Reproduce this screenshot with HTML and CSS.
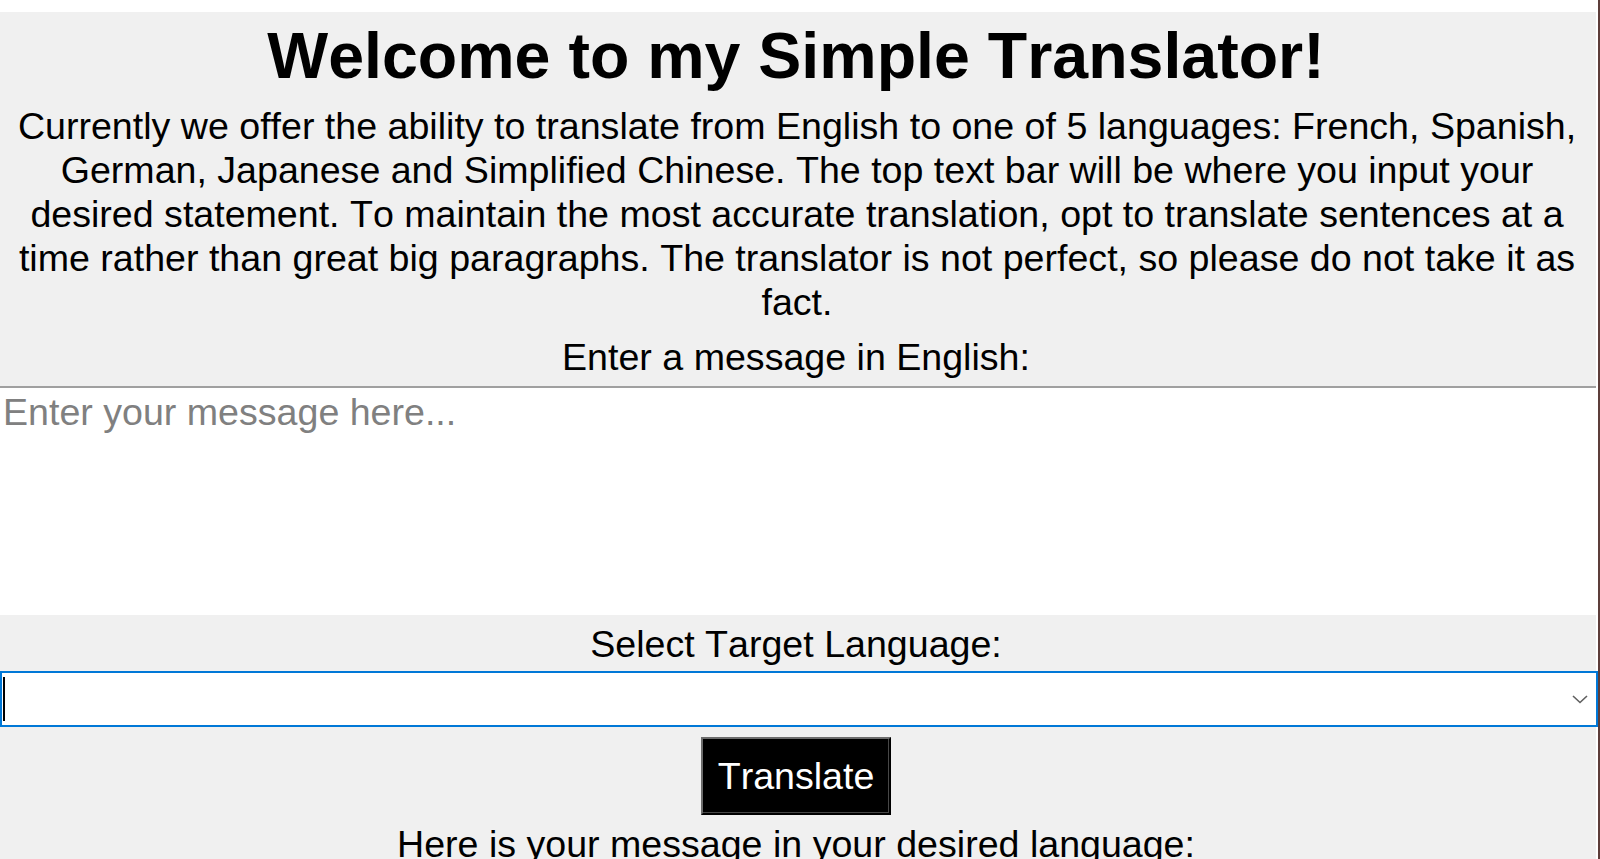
FILE: index.html
```html
<!DOCTYPE html>
<html lang="en">
<head>
<meta charset="utf-8">
<title>Simple Translator</title>
<link rel="stylesheet" href="styles.css">
</head>
<body>
<div class="screen">
  <main class="app">
    <h1 class="title">Welcome to my Simple Translator!</h1>
    <p class="desc">Currently we offer the ability to translate from English to one of 5 languages: French, Spanish,<br>German, Japanese and Simplified Chinese. The top text bar will be where you input your<br>desired statement. To maintain the most accurate translation, opt to translate sentences at a<br>time rather than great big paragraphs. The translator is not perfect, so please do not take it as<br>fact.</p>
    <div class="label label-input">Enter a message in English:</div>
    <textarea class="message" placeholder="Enter your message here..."></textarea>
    <div class="label label-select">Select Target Language:</div>
    <div class="combo">
      <span class="caret"></span>
      <svg class="chevron" width="16" height="9" viewBox="0 0 16 9"><polyline points="1,1 8,7.5 15,1" fill="none" stroke="#5f5f5f" stroke-width="1.6"/></svg>
    </div>
    <div class="actions"><button class="translate" type="button">Translate</button></div>
    <div class="label label-output">Here is your message in your desired language:</div>
  </main>
  <div class="gap"></div>
  <div class="edge"></div>
</div>
</body>
</html>
```

FILE: styles.css
```css
html, body {
  margin: 0;
  padding: 0;
  background: #ffffff;
  height: 859px;
  overflow: hidden;
}

body {
  font-family: "Liberation Sans", Arial, sans-serif;
  font-kerning: none;
  color: #000;
}

.screen {
  display: flex;
  height: 859px;
}

.app {
  width: 1596px;
  margin-top: 12px;
  height: 847px;
  background: #f0f0f0;
  display: flex;
  flex-direction: column;
  overflow: visible;
  position: relative;
  z-index: 1;
}

.app > * {
  flex-shrink: 0;
}

.gap {
  width: 2px;
  background: #ffffff;
}

.edge {
  width: 2px;
  background: #5c3d3a;
}

.title {
  margin: 8px 0 0;
  padding-right: 4px;
  font-size: 64.5px;
  line-height: 72px;
  font-weight: bold;
  text-align: center;
}

.desc {
  margin: 12px 0 0;
  padding-right: 2px;
  font-size: 37.6px;
  line-height: 44px;
  text-align: center;
  white-space: nowrap;
}

.label {
  font-size: 37.6px;
  line-height: 44px;
  text-align: center;
  padding-right: 4px;
  white-space: nowrap;
}

.label-input {
  margin-top: 11px;
}

.message {
  display: block;
  box-sizing: border-box;
  width: 100%;
  height: 229px;
  margin: 7px 0 0;
  padding: 2px 3px 0;
  border: none;
  border-top: 2px solid #a0a0a0;
  background: #ffffff;
  font-family: "Liberation Sans", Arial, sans-serif;
  font-kerning: none;
  font-size: 37.6px;
  line-height: 44px;
  color: #000;
  resize: none;
  outline: none;
  overflow: hidden;
}

.message::placeholder {
  color: #808080;
  opacity: 1;
}

.label-select {
  margin-top: 7px;
}

.combo {
  box-sizing: border-box;
  width: calc(100% + 2px);
  height: 56px;
  margin-top: 5px;
  border: 2px solid #0078d7;
  background: #ffffff;
  display: flex;
  align-items: center;
  justify-content: space-between;
  padding: 0 8px 0 1px;
}

.caret {
  width: 2px;
  height: 44px;
  background: #000;
}

.chevron {
  display: block;
  margin-top: 1px;
}

.actions {
  display: flex;
  justify-content: center;
  padding-right: 4px;
  margin-top: 10px;
}

.translate {
  box-sizing: border-box;
  width: 190px;
  height: 78px;
  padding: 0;
  background: #000;
  color: #fff;
  font-family: "Liberation Sans", Arial, sans-serif;
  font-kerning: none;
  font-size: 37.6px;
  line-height: 44px;
  border-style: solid;
  border-width: 2px;
  border-color: #6c6c6c #000 #000 #6c6c6c;
  box-shadow: inset -1px -1px 0 #474747;
  cursor: pointer;
}

.label-output {
  margin-top: 7px;
}
```
